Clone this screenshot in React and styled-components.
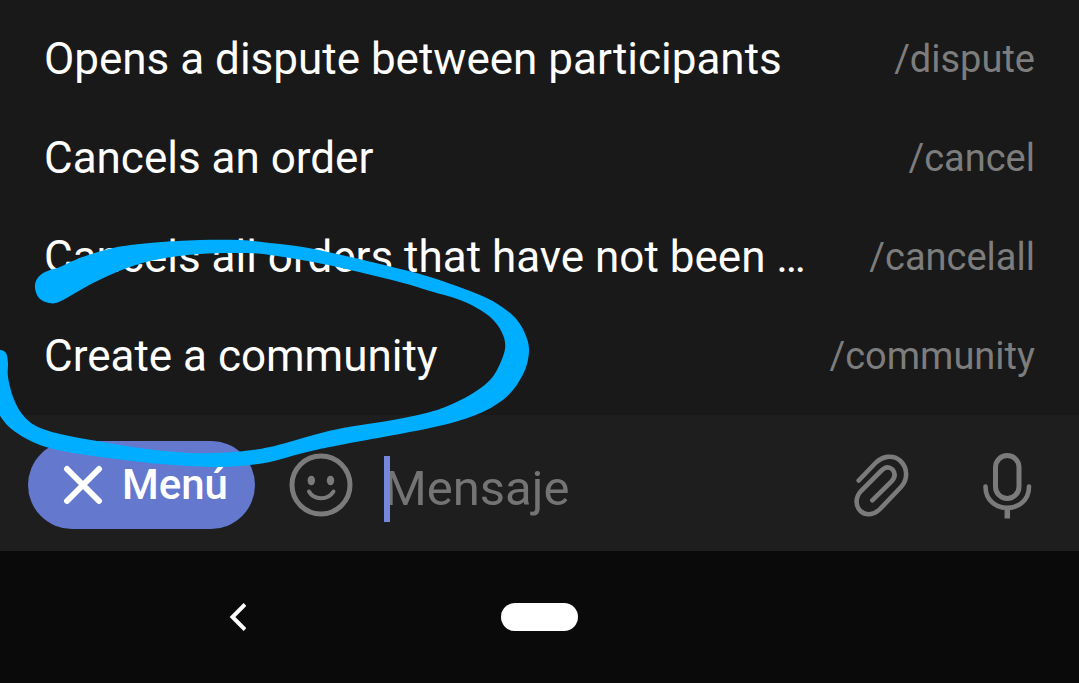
import React from "react";
import styled, { createGlobalStyle } from "styled-components";

const GlobalStyle = createGlobalStyle`
  * { box-sizing: border-box; }
  body { margin: 0; background: #0a0a0a; }
  button, input { font-family: inherit; border: 0; margin: 0; padding: 0; background: none; }
`;

const Screen = styled.div`
  position: relative;
  min-height: 100vh;
  overflow: hidden;
  display: flex;
  flex-direction: column;
  font-family: Roboto, "Liberation Sans", sans-serif;
`;

const CommandList = styled.ul`
  list-style: none;
  margin: 0;
  padding: 9px 0 10px;
  background: #191919;
`;

const CommandRow = styled.button`
  display: flex;
  align-items: center;
  justify-content: space-between;
  gap: 40px;
  width: 100%;
  height: 99px;
  padding: 0 44px;
  text-align: left;
`;

const Description = styled.span`
  font-size: 44px;
  line-height: 52px;
  color: #fff;
  white-space: nowrap;
`;

const Command = styled.span`
  font-size: 38px;
  line-height: 48px;
  color: #7d7d7d;
  white-space: nowrap;
`;

const Composer = styled.form`
  display: flex;
  align-items: center;
  height: 136px;
  padding: 4px 44px 0 28px;
  background: #1e1e1e;
`;

const MenuButton = styled.button`
  display: flex;
  align-items: center;
  gap: 19px;
  height: 88px;
  padding: 0 27px 0 35px;
  border-radius: 44px;
  background: #6478cd;
  color: #fff;
  font-size: 42px;
  line-height: 50px;
  font-weight: 500;
`;

const IconButton = styled.button`
  display: flex;
  flex: none;
  color: #7b7b7b;
`;

const EmojiButton = styled(IconButton)`
  margin-left: 34px;
`;

const Field = styled.label`
  display: flex;
  align-items: center;
  flex: 1;
  min-width: 0;
  height: 66px;
  margin: 8px 24px 0 31px;
  position: relative;
`;

const Caret = styled.span`
  position: absolute;
  left: 0;
  top: 0;
  width: 6px;
  height: 66px;
  background: #7388dc;
`;

const MessageInput = styled.input`
  width: 100%;
  font-size: 49px;
  line-height: 60px;
  color: #fff;
  outline: none;
  &::placeholder { color: #747474; opacity: 1; }
`;

const Actions = styled.div`
  display: flex;
  gap: 66px;
`;

const NavBar = styled.nav`
  flex: 1;
  min-height: 132px;
  display: grid;
  grid-template-columns: repeat(3, 28%);
  justify-content: center;
  align-items: center;
  justify-items: center;
  background: #0a0a0a;
`;

const NavButton = styled.button`
  display: flex;
  color: #fff;
`;

const HomePill = styled.span`
  width: 77px;
  height: 28px;
  border-radius: 14px;
  background: #fff;
`;

const Scribble = styled.svg`
  position: absolute;
  left: 0;
  top: 0;
  pointer-events: none;
`;

const commands = [
  ["Opens a dispute between participants", "/dispute"],
  ["Cancels an order", "/cancel"],
  ["Cancels all orders that have not been …", "/cancelall"],
  ["Create a community", "/community"],
];

// Outline of the hand-drawn loop: outer edge first, then back along the inner edge.
const loop = [
  [35, 288], [37, 279], [45, 272], [60, 267], [80, 258], [113, 248], [150, 243], [200, 240], [240, 240],
  [270, 243], [303, 247], [337, 254], [380, 264], [430, 277], [480, 295], [502, 307],
  [517, 320], [526, 336], [529, 351], [525, 370], [513, 390], [497, 404], [473, 416],
  [430, 428], [340, 445], [303, 453], [270, 462], [240, 466], [213, 467], [173, 465],
  [133, 461], [73, 453], [40, 445], [17, 433], [3, 420], [-7, 400], [-9, 370], [-6, 354],
  [0, 350], [6, 353], [8, 363], [8, 377], [13, 397], [22, 414], [36, 426], [60, 434],
  [97, 441], [147, 449], [193, 453], [235, 452], [270, 447], [310, 436], [343, 428],
  [393, 420], [430, 412], [450, 405], [470, 395], [488, 382], [498, 368], [505, 349],
  [503, 335], [495, 322], [482, 311], [460, 300], [430, 291], [403, 283], [363, 273],
  [323, 264], [270, 255], [240, 253], [200, 254], [160, 259], [127, 268], [93, 283],
  [61, 301], [49, 303], [39, 298],
];

function smoothPath(points) {
  const n = points.length;
  const at = (i) => points[(i + n) % n];
  let d = `M${points[0].join(" ")}`;
  for (let i = 0; i < n; i++) {
    const [a, b, c, e] = [at(i - 1), at(i), at(i + 1), at(i + 2)];
    d += `C${b[0] + (c[0] - a[0]) / 6} ${b[1] + (c[1] - a[1]) / 6} ${c[0] - (e[0] - b[0]) / 6} ${c[1] - (e[1] - b[1]) / 6} ${c[0]} ${c[1]}`;
  }
  return d + "Z";
}

const CloseIcon = () => (
  <svg width="40" height="40" viewBox="0 0 40 40" fill="none" stroke="currentColor" strokeWidth="6" strokeLinecap="round" aria-hidden="true">
    <path d="M4 4 36 36M36 4 4 36" />
  </svg>
);

const SmileIcon = () => (
  <svg width="64" height="64" viewBox="0 0 64 64" fill="none" stroke="currentColor" strokeWidth="5" strokeLinecap="round" aria-hidden="true">
    <circle cx="32" cy="32" r="29" />
    <path d="M20 38.500C25 47.500 39 47.500 44.500 38.500" strokeWidth="4" />
    <ellipse cx="22.300" cy="27.500" rx="3.700" ry="4.800" fill="currentColor" stroke="none" />
    <ellipse cx="41.500" cy="27.500" rx="3.700" ry="4.800" fill="currentColor" stroke="none" />
  </svg>
);

const ClipIcon = () => (
  <svg width="64" height="68" viewBox="0 0 64 68" fill="none" stroke="currentColor" strokeWidth="5" strokeLinecap="round" aria-hidden="true">
    <path d="M9.700 29.500 26.500 12C33 5.500 43.500 3 51 9.500C59 17 59 28.500 52 36L31.500 57.500C26 63.500 17.500 65.500 11.500 60C6 54.500 6.500 46 12 40L32.500 19.500C36 16 40 15.500 43.500 18.500C46.500 22 46 26.500 42.500 30.500L23.300 49.300" strokeWidth="4.600" />
  </svg>
);

const MicIcon = () => (
  <svg width="56" height="68" viewBox="0 0 56 68" fill="none" stroke="currentColor" strokeWidth="5" strokeLinecap="round" aria-hidden="true">
    <rect x="16.500" y="4.500" width="23.500" height="43" rx="11.750" />
    <path d="M6.500 35.500C6.500 64 50 64 50 35.500" strokeWidth="4.600" />
    <path d="M28.300 57V67.500" strokeLinecap="butt" strokeWidth="5.500" />
  </svg>
);

const BackIcon = () => (
  <svg width="18" height="28" viewBox="0 0 18 28" fill="none" stroke="currentColor" strokeWidth="4" aria-hidden="true">
    <path d="M17 1.500 4.500 14 17 26.500" />
  </svg>
);

export default function App() {
  return (
    <Screen>
      <GlobalStyle />
      <CommandList>
        {commands.map(([description, command]) => (
          <li key={command}>
            <CommandRow type="button">
              <Description>{description}</Description>
              <Command>{command}</Command>
            </CommandRow>
          </li>
        ))}
      </CommandList>
      <Composer onSubmit={(e) => e.preventDefault()}>
        <MenuButton type="button"><CloseIcon />Menú</MenuButton>
        <EmojiButton type="button" aria-label="Emoji"><SmileIcon /></EmojiButton>
        <Field>
          <MessageInput type="text" placeholder="Mensaje" aria-label="Mensaje" />
          <Caret />
        </Field>
        <Actions>
          <IconButton type="button" aria-label="Adjuntar"><ClipIcon /></IconButton>
          <IconButton type="button" aria-label="Grabar audio"><MicIcon /></IconButton>
        </Actions>
      </Composer>
      <NavBar>
        <NavButton type="button" aria-label="Atrás"><BackIcon /></NavButton>
        <NavButton type="button" aria-label="Inicio"><HomePill /></NavButton>
      </NavBar>
      <Scribble width="540" height="480" viewBox="0 0 540 480" aria-hidden="true">
        <path d={smoothPath(loop)} fill="#00aeff" />
      </Scribble>
    </Screen>
  );
}
